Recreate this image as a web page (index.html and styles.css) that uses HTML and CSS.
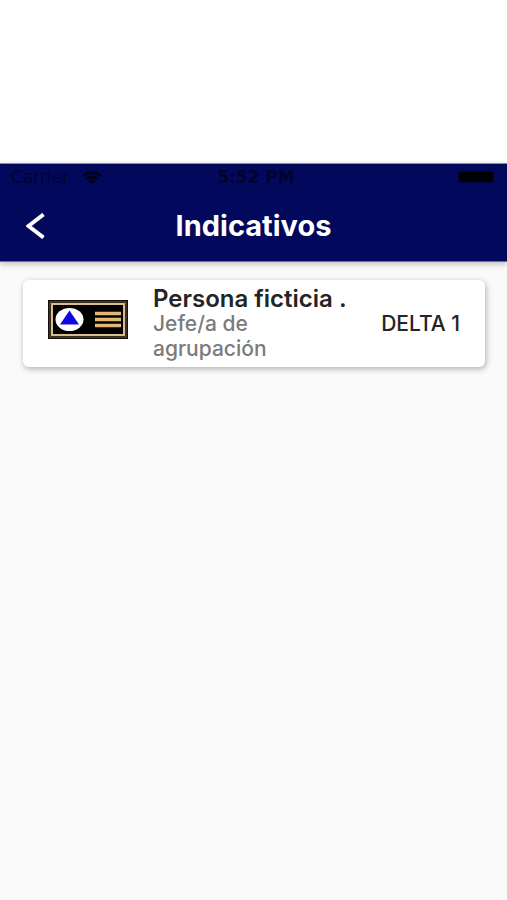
FILE: index.html
```html
<!DOCTYPE html>
<html lang="es">
<head>
<meta charset="utf-8">
<meta name="viewport" content="width=device-width, initial-scale=1">
<title>Indicativos</title>
<link rel="stylesheet" href="styles.css">
</head>
<body>
<header class="app-header">
  <div class="status-bar">
    <div class="carrier">
      <span>Carrier</span>
      <svg class="wifi" viewBox="0 0 22 14" aria-hidden="true">
        <path d="M1 5Q11-3 21 5L19 7Q11 1 3 7ZM4 8Q11 3 18 8L16 10Q11 7 6 10ZM7 11Q11 8 15 11L11 14Z"/>
      </svg>
    </div>
    <time class="clock">5:52 PM</time>
    <span class="battery"></span>
  </div>
  <div class="title-bar">
    <button class="back" type="button" aria-label="Volver">
      <svg viewBox="0 0 20 26" aria-hidden="true"><path d="M17.500 1.500L2.500 13L17.500 24.500"/></svg>
    </button>
    <h1 class="title">Indicativos</h1>
  </div>
</header>
<main class="content">
  <article class="card">
    <svg class="badge" viewBox="0 0 80 39" aria-hidden="true">
      <rect width="80" height="39" fill="#15100c"/>
      <rect x="2" y="2" width="76" height="35" fill="#000" stroke="#6e5b42" stroke-width="1"/>
      <rect x="4" y="4" width="72" height="31" fill="#000" stroke="#d9bd92" stroke-width="2"/>
      <ellipse cx="21.500" cy="19.500" rx="14" ry="11.500" fill="#fff"/>
      <path d="M21.500 10.500L31 24.500H12Z" fill="#1206e0"/>
      <path d="M47 13.500H73M47 19.500H73M47 25.500H73" stroke="#e0b878" stroke-width="3.500"/>
    </svg>
    <div class="person">
      <h2 class="name">Persona ficticia .</h2>
      <p class="role">Jefe/a de agrupación</p>
    </div>
    <p class="callsign">DELTA 1</p>
  </article>
</main>
</body>
</html>
```

FILE: styles.css
```css
* {
  box-sizing: border-box;
}

body {
  margin: 0;
  padding-top: 163px;
  min-height: 100vh;
  display: flex;
  flex-direction: column;
  background: #fff;
  color: #242424;
  font-family: Inter, "Noto Sans", sans-serif;
}

h1,
h2,
p {
  margin: 0;
}

.app-header {
  position: relative;
  background: #02085c;
  border-top: 1px solid #8589b8;
  border-bottom: 1px solid #6a6ea6;
  box-shadow: 0 2px 6px rgba(0, 0, 0, 0.25);
}

.status-bar {
  display: grid;
  grid-template-columns: 1fr auto 1fr;
  align-items: center;
  height: 26px;
  padding: 0 14px 0 11px;
  color: #01032e;
  font-family: "DejaVu Sans", sans-serif;
  font-size: 17px;
}

.carrier {
  display: flex;
  align-items: center;
  gap: 12px;
}

.wifi {
  width: 22px;
  height: 14px;
  fill: #01021c;
}

.clock {
  font-weight: 700;
  padding-left: 8px;
}

.battery {
  justify-self: end;
  width: 34px;
  height: 10px;
  border-radius: 2px;
  background: #000007;
  box-shadow: 0 0 3px #000014;
}

.title-bar {
  display: grid;
  grid-template-columns: 72px 1fr 72px;
  align-items: center;
  height: 71px;
}

.back {
  justify-self: center;
  padding: 0;
  border: 0;
  background: none;
  cursor: pointer;
}

.back svg {
  display: block;
  width: 20px;
  height: 26px;
  fill: none;
  stroke: #fff;
  stroke-width: 4;
}

.title {
  color: #fff;
  font-size: 29px;
  line-height: 32px;
  font-weight: 700;
  text-align: center;
}

.content {
  flex: 1;
  padding: 18px 22px 18px 23px;
  background: #fafafa;
}

.card {
  display: grid;
  grid-template-columns: 80px 1fr auto;
  column-gap: 25px;
  align-items: center;
  padding: 6px 25px;
  border-radius: 6px;
  background: #fff;
  box-shadow: 1px 2px 6px rgba(0, 0, 0, 0.3);
}

.badge {
  display: block;
  align-self: start;
  width: 80px;
  height: 39px;
  margin-top: 14px;
}

.name {
  font-size: 24px;
  line-height: 25px;
  font-weight: 600;
  white-space: nowrap;
}

.role {
  max-width: 150px;
  color: #7b7b7b;
  font-size: 21px;
  line-height: 25px;
  font-weight: 500;
}

.callsign {
  font-size: 21px;
  line-height: 25px;
  font-weight: 500;
}
```
